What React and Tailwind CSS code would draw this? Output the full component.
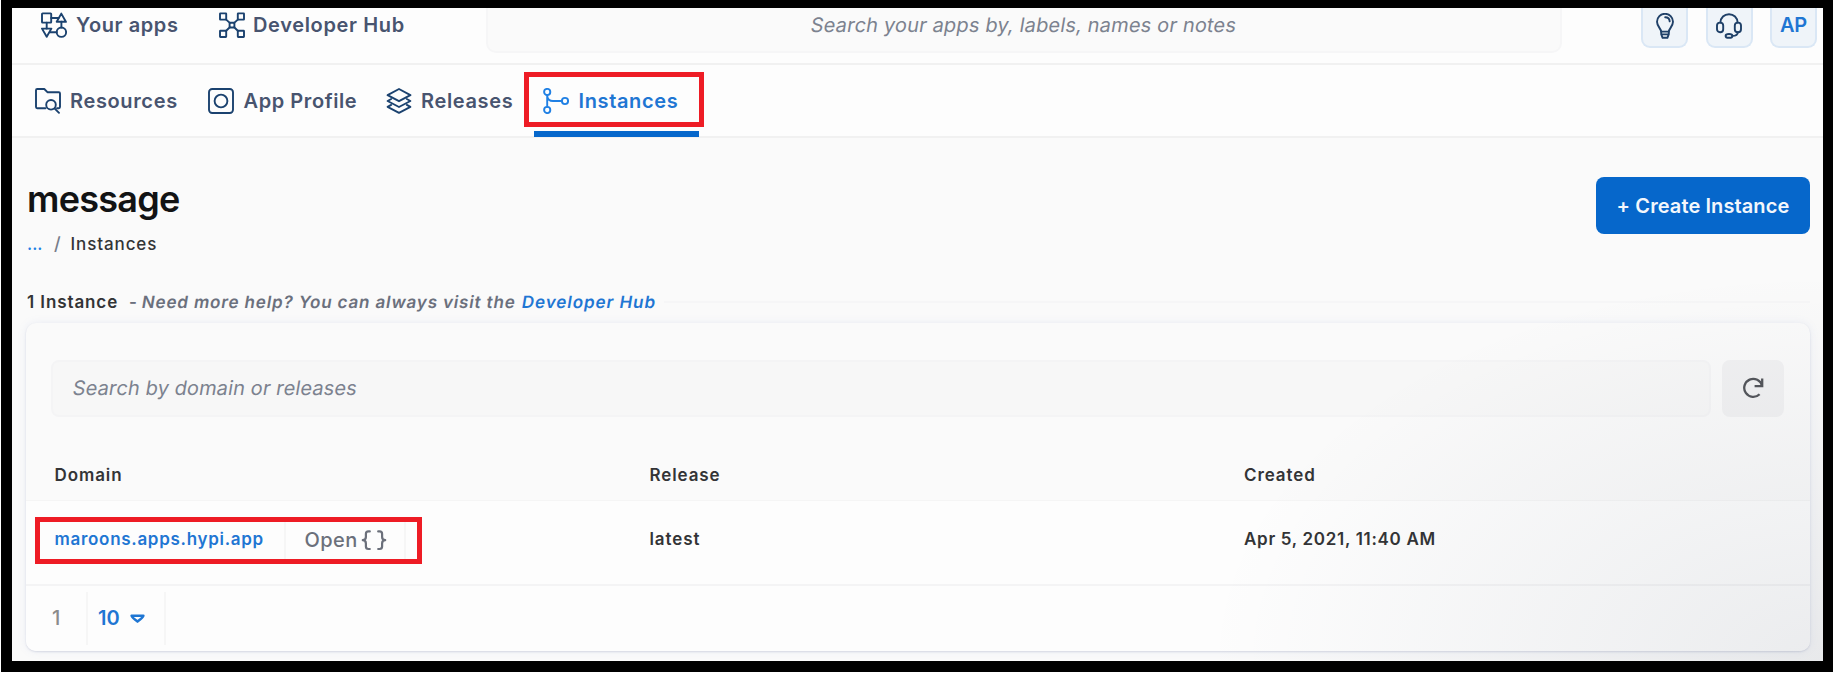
import React from "react";

function Icon({ className = "", children, box = 26, stroke = 1.9 }) {
  return (
    <svg
      viewBox={`0 0 ${box} ${box}`}
      className={`shrink-0 ${className}`}
      fill="none"
      stroke="currentColor"
      strokeWidth={stroke}
      strokeLinecap="round"
      strokeLinejoin="round"
    >
      {children}
    </svg>
  );
}

const AppsIcon = () => (
  <Icon className="h-[26px] w-[26px]">
    <rect x="1" y="1.4" width="9.2" height="9.2" rx="0.6" />
    <path d="M20.3 1.6 24.9 9.8H15.7Z" />
    <path d="M1 16.6H10.4L5.7 24.8Z" />
    <circle cx="20.4" cy="20.2" r="4.7" />
    <path d="M10.2 6H17.6M5.7 10.6V16.6M20.4 9.8V15.5M8.8 20.2H15.7" />
  </Icon>
);

const HubIcon = () => (
  <Icon className="h-[26px] w-[26px]">
    <rect x="1" y="1.4" width="6.2" height="6.2" rx="0.4" />
    <rect x="18.8" y="1.4" width="6.2" height="6.2" rx="0.4" />
    <rect x="1" y="18.8" width="6.2" height="6.2" rx="0.4" />
    <rect x="18.8" y="18.8" width="6.2" height="6.2" rx="0.4" />
    <rect x="10.6" y="10.7" width="4.8" height="4.8" rx="0.4" />
    <path d="M7.2 7.6 10.8 10.9M18.8 7.6 15.2 10.9M7.2 18.8 10.8 15.3M18.8 18.8 15.2 15.3" />
  </Icon>
);

const ResourcesIcon = () => (
  <Icon className="h-[26px] w-[26px]">
    <path d="M10.5 20.3H2.2A1.2 1.2 0 0 1 1 19.1V2.2A1.2 1.2 0 0 1 2.2 1H9.3L12.4 4.2H23.8A1.2 1.2 0 0 1 25 5.4V19.1A1.2 1.2 0 0 1 23.8 20.3H22" />
    <circle cx="16" cy="16.8" r="4.8" />
    <path d="M19.5 20.3 24 24.8" />
  </Icon>
);

const ProfileIcon = () => (
  <Icon className="h-[26px] w-[26px]">
    <rect x="1" y="1" width="24" height="24" rx="3.2" />
    <circle cx="13" cy="13" r="6.4" />
  </Icon>
);

const ReleasesIcon = () => (
  <Icon className="h-[26px] w-[26px]">
    <path d="M13 1 24.4 7.2 13 13.2 1.6 7.2Z" />
    <path d="M5.2 11 1.6 13 13 19 24.4 13 20.8 11" />
    <path d="M5.2 16.9 1.6 18.9 13 24.9 24.4 18.9 20.8 16.9" />
  </Icon>
);

const InstancesIcon = () => (
  <Icon className="h-[26px] w-[26px]">
    <circle cx="4.2" cy="4" r="3.1" />
    <circle cx="4.2" cy="22" r="3.1" />
    <circle cx="22" cy="13" r="3.1" />
    <path d="M4.2 7.1V18.9M4.2 7.8C4.6 11.4 6.6 13 10 13H18.9" />
  </Icon>
);

const BulbIcon = () => (
  <Icon className="h-[26px] w-[26px]">
    <path d="M9.2 18.6C9 15.6 5 13.4 5 8.8A8 8 0 0 1 21 8.8C21 13.4 17 15.6 16.8 18.6Z" />
    <path d="M9.2 18.6V21.2L10.6 24.8H15.4L16.8 21.2V18.6M9.4 21.4H16.6" />
    <path d="M13.2 4.2C15.8 4.2 17.5 5.8 17.7 8.4" />
  </Icon>
);

const SupportIcon = () => (
  <Icon className="h-[26px] w-[26px]">
    <path d="M4.4 9.6C4.6 4.6 8.2 1.2 13 1.2S21.4 4.6 21.6 9.6" />
    <rect x="1" y="9.6" width="6.2" height="9.6" rx="3" />
    <rect x="18.8" y="9.6" width="6.2" height="9.6" rx="3" />
    <path d="M21.9 19.2C21.7 21.8 19.6 22.9 16.4 22.9" />
    <ellipse cx="13" cy="22.9" rx="3.4" ry="1.9" />
  </Icon>
);

const RefreshIcon = () => (
  <Icon className="h-[22px] w-[22px]" box={22} stroke={2.3}>
    <path d="M17.6 17.2A9 9 0 1 1 20 8.8" strokeLinecap="butt" />
    <path d="M20.2 1.6V9.2H12.6" strokeLinecap="butt" strokeLinejoin="miter" />
  </Icon>
);

const BracesIcon = () => (
  <Icon className="h-[26px] w-[26px]" stroke={2.2}>
    <path d="M8.8 4.4H7.4C5.6 4.4 4.9 5.3 4.9 6.9V10C4.9 11.9 4 13 1.8 13.2 4 13.4 4.9 14.5 4.9 16.4V19.5C4.9 21.1 5.6 22 7.4 22H8.8" />
    <path d="M17.2 4.4H18.6C20.4 4.4 21.1 5.3 21.1 6.9V10C21.1 11.9 22 13 24.2 13.2 22 13.4 21.1 14.5 21.1 16.4V19.5C21.1 21.1 20.4 22 18.6 22H17.2" />
  </Icon>
);

const CaretIcon = () => (
  <Icon className="h-[15px] w-[15px]" box={15} stroke={2.5}>
    <path d="M1.6 4.8H13.4C13 6.4 10.4 8.4 7.5 10.6 4.6 8.4 2 6.4 1.6 4.8Z" />
  </Icon>
);

function SquareButton({ children }) {
  return (
    <button className="flex h-[40px] w-[47px] items-start justify-center rounded-b-[9px] border-2 border-t-0 border-[#dae7f5] bg-[#eff4f9] pt-[4.5px] text-[#1f4068]">
      {children}
    </button>
  );
}

function Header() {
  return (
    <header className="flex h-[57px] items-start border-b-2 border-[#f1f1f1] bg-[#fdfdfd] pr-[6px] pl-[28.5px] text-xl font-semibold tracking-[0.6px] text-[#48546f]">
      <a className="flex h-[34px] w-[178px] items-center gap-[9.5px] whitespace-nowrap">
        <span className="text-[#1b426f]"><AppsIcon /></span>
        Your apps
      </a>
      <a className="flex h-[34px] w-[267.5px] items-center gap-[8.5px] tracking-[0.65px] whitespace-nowrap">
        <span className="text-[#1b426f]"><HubIcon /></span>
        Developer Hub
      </a>
      <div className="flex h-[45px] w-[1076px] items-start justify-center rounded-b-[10px] border-2 border-t-0 border-[#f6f6f7] bg-[#fafafa]">
        <span className="h-[34px] -skew-x-[9.4deg] text-xl leading-[34px] font-normal tracking-[0.17px] text-[#7c828f]">
          Search your apps by, labels, names or notes
        </span>
      </div>
      <div className="ml-auto flex gap-[17.5px]">
        <SquareButton><BulbIcon /></SquareButton>
        <SquareButton><SupportIcon /></SquareButton>
        <SquareButton>
          <span className="text-xl leading-[25px] font-semibold tracking-[-0.3px] text-[#1f76d3]">AP</span>
        </SquareButton>
      </div>
    </header>
  );
}

function Nav() {
  return (
    <nav className="flex h-[73px] items-center border-b-2 border-[#f1f1f1] bg-[#fdfdfd] pl-[23px] text-xl font-semibold tracking-[0.64px] whitespace-nowrap text-[#48546f]">
      <a className="flex w-[173px] items-center gap-[9px]">
        <span className="text-[#1b426f]"><ResourcesIcon /></span>
        Resources
      </a>
      <a className="flex w-[178px] items-center gap-[9.5px] tracking-[0.58px]">
        <span className="text-[#1b426f]"><ProfileIcon /></span>
        App Profile
      </a>
      <a className="flex w-[138px] items-center gap-[9px]">
        <span className="text-[#1b426f]"><ReleasesIcon /></span>
        Releases
      </a>
      <a className="relative -mt-[2px] flex h-[55px] w-[180px] items-center gap-[9.5px] border-[5px] border-[#ee1c25] pt-[2px] pl-[14px] text-[#1f76d3]">
        <span className="text-[#2080e4]"><InstancesIcon /></span>
        Instances
        <span className="absolute top-[54px] left-[5px] h-[6px] w-[165px] bg-[#0667cb]" />
      </a>
    </nav>
  );
}

function Card() {
  return (
    <section className="mt-[7px] mr-[13px] ml-[14px] flex h-[328px] flex-col overflow-hidden rounded-[10px] bg-[#fafafa] shadow-[0_1px_2px_rgba(40,60,110,0.14),0_0_9px_rgba(120,150,210,0.13)]">
      <div className="flex gap-[11px] pt-[37px] pr-[26px] pl-[25px]">
        <div className="flex h-[57px] flex-1 items-center rounded-lg border-2 border-[#f4f4f5] bg-[#f7f7f7] pb-[2px] pl-[20px] text-xl tracking-[0.12px] text-[#7c828f]">
          <span className="-skew-x-[9.4deg]">Search by domain or releases</span>
        </div>
        <button className="flex h-[57px] w-[62px] items-center justify-center rounded-lg bg-[#f1f1f2] pb-px text-[#54565b]">
          <RefreshIcon />
        </button>
      </div>
      <div className="grid h-[84px] flex-none grid-cols-[595px_594.5px_1fr] border-b border-[#f5f5f5] pt-[45px] pl-[28.5px] text-[17px] leading-[26px] font-semibold tracking-[0.9px] text-[#333436]">
        <span>Domain</span>
        <span>Release</span>
        <span>Created</span>
      </div>
      <div className="grid h-[85px] flex-none grid-cols-[595px_594.5px_1fr] items-center border-b-2 border-[#f4f4f5] bg-[#fdfdfd] pb-[5px] pl-[28.5px] text-[17px] font-semibold tracking-[0.7px] text-[#333436]">
        <div className="flex items-center">
          <div className="-my-4 -ml-[19.5px] flex h-[47px] w-[387px] items-center border-[5px] border-[#ee1c25] pl-[14.5px]">
            <span className="w-[229.5px] text-[#1f76d3]">maroons.apps.hypi.app</span>
            <span className="flex h-[37px] w-[122px] items-center gap-[3px] border-x-2 border-[#f6f6f6] pl-[18.5px] text-xl font-medium tracking-[0.4px] text-[#6b707b]">
              Open
              <BracesIcon />
            </span>
          </div>
        </div>
        <span className="tracking-[0.9px]">latest</span>
        <span>Apr 5, 2021, 11:40 AM</span>
      </div>
      <div className="flex flex-1 items-center bg-[#fdfdfd] pb-px pl-[26px] text-xl">
        <span className="flex h-[53px] w-[36px] items-center border-r-2 border-[#f6f6f6] font-medium text-[#8b8b8b]">1</span>
        <span className="flex h-[53px] w-[78px] items-center gap-[10px] border-r-2 border-[#f6f6f6] pl-[10px] font-semibold text-[#1f76d3]">
          10
          <CaretIcon />
        </span>
      </div>
    </section>
  );
}

export default function App() {
  return (
    <div className="h-[674px] w-[1834px] bg-white pl-px font-['Inter',sans-serif]">
      <div className="h-[672px] w-[1832px] bg-black pt-[8px] pl-[11px]">
        <div className="relative h-[653px] w-[1811px] overflow-hidden bg-[#fafafa]">
          <Header />
          <Nav />
          <div className="flex h-[150px] items-start justify-between pr-[13px] pl-[15px]">
            <div className="pt-[32.5px]">
              <h1 className="text-4xl leading-[56px] font-semibold tracking-[-0.75px] text-[#121314]">message</h1>
              <div className="flex h-[34px] items-center text-[17px] leading-[34px] font-medium text-[#333436]">
                <span className="w-[27px] text-[#2080e4]">...</span>
                <span className="w-[16.5px] text-[18px] text-[#777d8a]">/</span>
                <span className="tracking-[0.9px]">Instances</span>
              </div>
            </div>
            <button className="mt-[39px] h-[57px] w-[214px] rounded-lg bg-[#0667cb] text-xl font-semibold tracking-[0.1px] text-[#f3f7fc]">
              + Create Instance
            </button>
          </div>
          <div className="flex h-[28px] items-center pr-[13px] pl-[15px] text-[17px] leading-[28px] font-semibold whitespace-nowrap text-[#333436]">
            <span className="w-[102px] tracking-[0.9px]">1 Instance</span>
            <span className="w-[13px] text-[#6b707d]">-</span>
            <span className="w-[380px] -skew-x-[9.4deg] tracking-[0.85px] text-[#6b707d]">Need more help? You can always visit the</span>
            <span className="mr-[8px] -skew-x-[9.4deg] tracking-[0.95px] text-[#1f76d3]">Developer Hub</span>
            <span className="h-[2px] flex-1 bg-[#f6f6f7]" />
          </div>
          <Card />
          <div className="pointer-events-none absolute right-0 bottom-0 h-[390px] w-[620px] bg-[radial-gradient(ellipse_100%_100%_at_100%_100%,rgba(20,35,60,0.08),rgba(20,35,60,0.045)_45%,rgba(20,35,60,0.01)_84%,transparent)]" />
        </div>
      </div>
    </div>
  );
}
